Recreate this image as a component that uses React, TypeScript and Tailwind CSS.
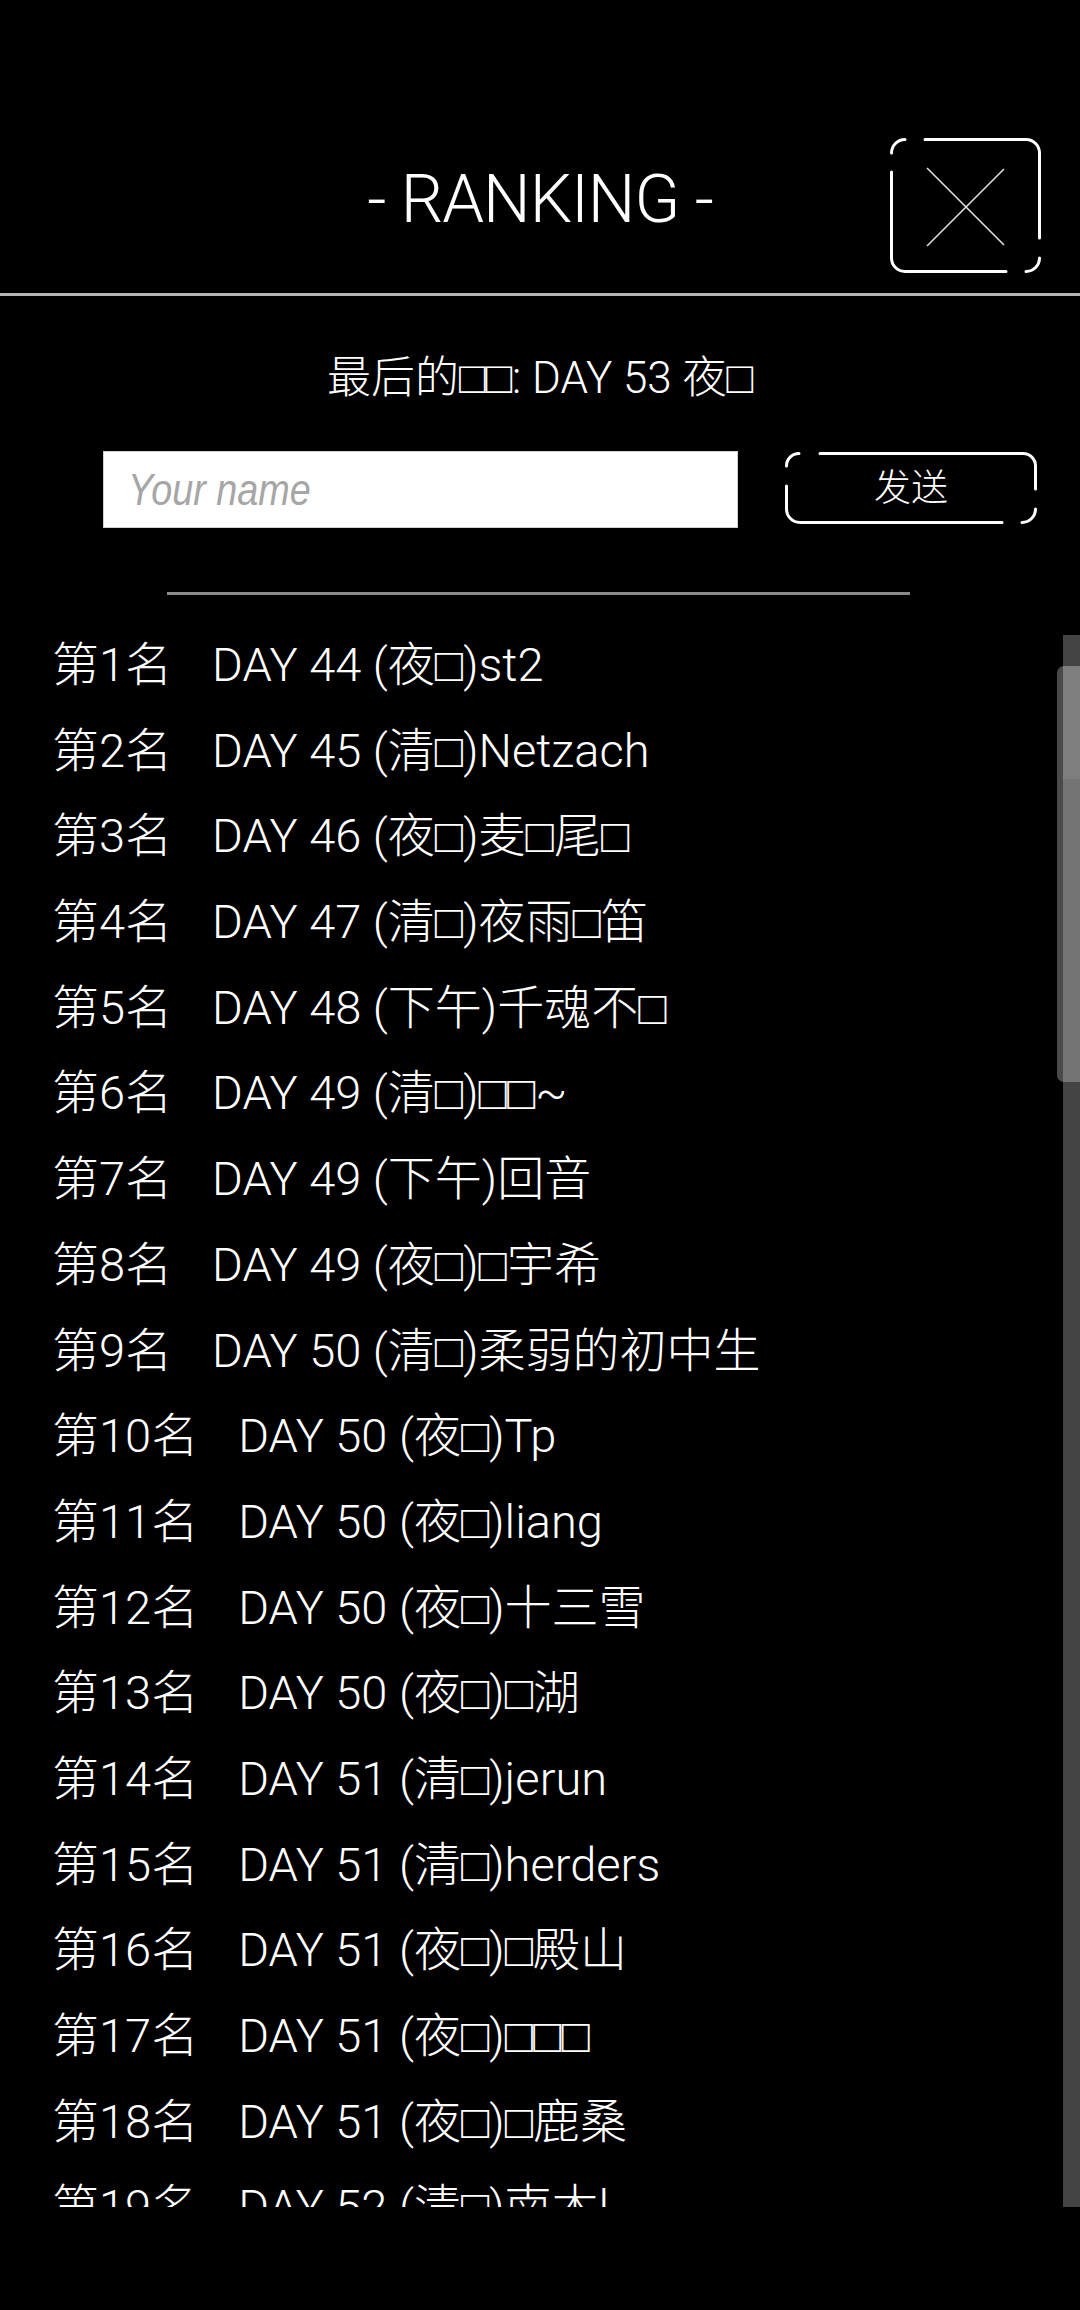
import { Fragment } from "react"

const ranking = [
    "DAY 44 (夜□)st2",
    "DAY 45 (清□)Netzach",
    "DAY 46 (夜□)麦□尾□",
    "DAY 47 (清□)夜雨□笛",
    "DAY 48 (下午)千魂不□",
    "DAY 49 (清□)□□~",
    "DAY 49 (下午)回音",
    "DAY 49 (夜□)□宇希",
    "DAY 50 (清□)柔弱的初中生",
    "DAY 50 (夜□)Tp",
    "DAY 50 (夜□)liang",
    "DAY 50 (夜□)十三雪",
    "DAY 50 (夜□)□湖",
    "DAY 51 (清□)jerun",
    "DAY 51 (清□)herders",
    "DAY 51 (夜□)□殿山",
    "DAY 51 (夜□)□□□",
    "DAY 51 (夜□)□鹿桑",
    "DAY 52 (清□)南木l",
]

// missing-glyph boxes from the game font
function WithTofu({ text }: { text: string }) {
    const parts = text.split("□")
    return (
        <>
            {parts.map((part, i) => (
                <Fragment key={i}>
                    {i > 0 && (
                        <span className="font-['Liberation_Sans','DejaVu_Sans',sans-serif] font-normal">□</span>
                    )}
                    {part}
                </Fragment>
            ))}
        </>
    )
}

function CloseFrame() {
    return (
        <svg width="151" height="135" viewBox="0 0 151 135" fill="none">
            <g stroke="#fff" strokeWidth="3" strokeLinecap="round">
                <path d="M1.5 15 A13.5 13.5 0 0 1 15 1.5" />
                <path d="M35 1.5 H136 A13.5 13.5 0 0 1 149.5 15 V100" />
                <path d="M149.5 120 A13.5 13.5 0 0 1 136 133.5" />
                <path d="M116 133.5 H15 A13.5 13.5 0 0 1 1.5 120 V34" />
            </g>
            <g stroke="#e0e0e0" strokeWidth="1.6">
                <path d="M37 30 L114 107" />
                <path d="M114 31 L37 108" />
            </g>
        </svg>
    )
}

function ButtonFrame() {
    return (
        <svg className="absolute inset-0" width="252" height="72" viewBox="0 0 252 72" fill="none">
            <g stroke="#fff" strokeWidth="3" strokeLinecap="round">
                <path d="M1.5 14 A12.5 12.5 0 0 1 14 1.5" />
                <path d="M35 1.5 H238 A12.5 12.5 0 0 1 250.5 14 V37" />
                <path d="M250.5 57 A13.5 13.5 0 0 1 237 70.5" />
                <path d="M217 70.5 H15 A13.5 13.5 0 0 1 1.5 57 V34" />
            </g>
        </svg>
    )
}

export default function App() {
    return (
        <div className="min-h-[2310px] w-full bg-black text-white font-['Roboto','Noto_Sans_CJK_SC',sans-serif] font-light">
            {/* Header */}
            <header className="grid h-[293px] grid-cols-[1fr_auto_1fr] items-start pt-[138px]">
                <div />
                <h1 className="mt-[28px] text-[67px] leading-[67px] tracking-[-1px] whitespace-pre">- RANKING -</h1>
                <div className="flex justify-end pr-[39px]">
                    <button className="block">
                        <CloseFrame />
                    </button>
                </div>
            </header>
            <div className="h-[3px] bg-[#b4b4b4]" />

            {/* Last record */}
            <p className="mt-[60px] text-center text-[44px] leading-[44px]">
                <WithTofu text="最后的□□: DAY 53 夜□" />
            </p>

            {/* Name input */}
            <div className="mt-[51px] flex items-start">
                <div className="ml-[103px] flex h-[77px] w-[635px] items-center border border-[#d0d0d0] bg-white pl-[24px]">
                    <span className="inline-block origin-left scale-x-[0.84] font-['Liberation_Sans',sans-serif] text-[45px] font-normal italic text-[#a6a6a6]">
                        Your name
                    </span>
                </div>
                <button className="relative mt-[1px] ml-[47px] flex h-[72px] w-[252px] items-center justify-center pb-[5px] text-[37px] leading-none">
                    <ButtonFrame />
                    <span className="relative font-['Noto_Sans_CJK_SC',sans-serif]">发送</span>
                </button>
            </div>

            <div className="mt-[64px] ml-[167px] h-[3px] w-[743px] bg-[#8a8a8a]" />

            {/* Ranking list */}
            <div className="mt-[40px] flex h-[1572px]">
                <ul className="flex flex-1 flex-col gap-[33.7px] overflow-hidden pt-[4px] pl-[52px] text-[47px]">
                    {ranking.map((entry, i) => (
                        <li key={i} className="shrink-0 whitespace-pre leading-[52px]">
                            <span>第{i + 1}名</span>
                            <span className="ml-[40px]">
                                <WithTofu text={entry} />
                            </span>
                        </li>
                    ))}
                </ul>
                <div className="relative flex w-[23px] justify-end">
                    <div className="h-full w-[17px] bg-[#444]" />
                    <div className="absolute top-[31px] left-0 flex h-[416px] w-[23px] justify-end rounded-l-[7px] bg-[#4a4a4a]">
                        <div className="flex h-full w-[17px] flex-col bg-[#747474]">
                            <div className="h-[113px] bg-[#7e7e7e]" />
                        </div>
                    </div>
                </div>
            </div>
        </div>
    )
}
